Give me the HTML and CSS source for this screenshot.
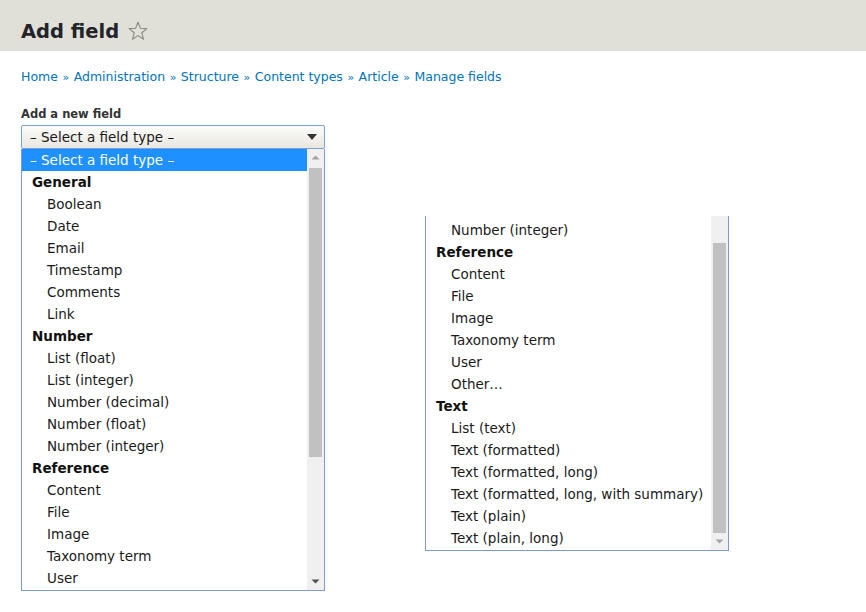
FILE: index.html
```html
<!DOCTYPE html>
<html>
<head>
<meta charset="utf-8">
<link rel="stylesheet" href="styles.css">
</head>
<body>
<header class="page-head">
  <h1 class="title">Add field</h1>
  <svg class="star" width="20" height="20" viewBox="0 0 20 20"><path d="M10 1.2 L12.4 7.3 L18.8 7.6 L13.8 11.7 L15.5 18.2 L10 14.6 L4.5 18.2 L6.2 11.7 L1.2 7.6 L7.6 7.3 Z" fill="none" stroke="#8a8a80" stroke-width="1.1" stroke-linejoin="round"/></svg>
</header>
<main class="content">
  <nav class="crumbs">
    <a href="#">Home</a><span class="sep">»</span><a href="#">Administration</a><span class="sep">»</span><a href="#">Structure</a><span class="sep">»</span><a href="#">Content types</a><span class="sep">»</span><a href="#">Article</a><span class="sep">»</span><a href="#">Manage fields</a>
  </nav>
  <div class="row">
    <div class="field">
      <div class="label">Add a new field</div>
      <div class="select">
        <span>– Select a field type –</span>
        <svg class="caret" width="10" height="7" viewBox="0 0 10 7"><path d="M0 0 H10 L5 6 Z" fill="#333"/></svg>
      </div>
      <div class="list list-open">
        <div class="items">
          <div class="opt sel">– Select a field type –</div>
          <div class="grp">General</div>
          <div class="opt">Boolean</div>
          <div class="opt">Date</div>
          <div class="opt">Email</div>
          <div class="opt">Timestamp</div>
          <div class="opt">Comments</div>
          <div class="opt">Link</div>
          <div class="grp">Number</div>
          <div class="opt">List (float)</div>
          <div class="opt">List (integer)</div>
          <div class="opt">Number (decimal)</div>
          <div class="opt">Number (float)</div>
          <div class="opt">Number (integer)</div>
          <div class="grp">Reference</div>
          <div class="opt">Content</div>
          <div class="opt">File</div>
          <div class="opt">Image</div>
          <div class="opt">Taxonomy term</div>
          <div class="opt">User</div>
        </div>
        <div class="sbar">
          <svg class="arr" width="17" height="17" viewBox="0 0 17 17"><path d="M4.5 10.5 H12.5 L8.5 6.5 Z" fill="#a3a3a3"/></svg>
          <div class="track"><div class="thumb thumb-left"></div></div>
          <svg class="arr" width="17" height="17" viewBox="0 0 17 17"><path d="M4.5 6.5 H12.5 L8.5 10.5 Z" fill="#505050"/></svg>
        </div>
      </div>
    </div>
    <div class="list list-tail">
      <div class="items items-tail">
        <div class="opt">Number (integer)</div>
        <div class="grp">Reference</div>
        <div class="opt">Content</div>
        <div class="opt">File</div>
        <div class="opt">Image</div>
        <div class="opt">Taxonomy term</div>
        <div class="opt">User</div>
        <div class="opt">Other…</div>
        <div class="grp">Text</div>
        <div class="opt">List (text)</div>
        <div class="opt">Text (formatted)</div>
        <div class="opt">Text (formatted, long)</div>
        <div class="opt">Text (formatted, long, with summary)</div>
        <div class="opt">Text (plain)</div>
        <div class="opt">Text (plain, long)</div>
      </div>
      <div class="sbar sbar-tail">
        <div class="track"><div class="thumb thumb-right"></div></div>
        <svg class="arr" width="17" height="17" viewBox="0 0 17 17"><path d="M4.5 6.5 H12.5 L8.5 10.5 Z" fill="#a3a3a3"/></svg>
      </div>
    </div>
  </div>
</main>
</body>
</html>
```

FILE: styles.css
```css
* { box-sizing: border-box; }
html, body { margin: 0; padding: 0; background: #fff; }
body { font-family: "DejaVu Sans", "Liberation Sans", sans-serif; color: #222330; font-size: 13px; }

.page-head {
  background: #e0e0d8;
  height: 51px;
  padding: 11px 21px 0;
  display: flex;
  align-items: center;
  gap: 9px;
}
.title {
  margin: 0;
  font-size: 19.5px;
  font-weight: bold;
  color: #232429;
}
.star { display: block; margin-top: -1px; }

.content { padding: 0 21px; }

.crumbs {
  margin-top: 17px;
  height: 17px;
  line-height: 17px;
  font-size: 12.5px;
}
.crumbs a { color: #0074bd; text-decoration: none; }
.crumbs .sep { color: #0074bd; margin: 0 4.5px; font-size: 11px; }

.row { display: flex; gap: 100px; margin-top: 22px; }

.field { width: 304px; }
.label {
  font-weight: bold;
  font-size: 11.5px;
  line-height: 14px;
  color: #333;
  margin-bottom: 4px;
}
.select {
  height: 24px;
  border: 1px solid #7a9fd9;
  border-radius: 2px;
  background: linear-gradient(#fcfcfa, #e8e7e0);
  display: flex;
  align-items: center;
  justify-content: space-between;
  padding: 0 7px 0 8px;
  font-size: 13.5px;
  color: #1a1a1a;
}
.caret { display: block; }

.list {
  border: 1px solid #7a9cd3;
  display: flex;
  background: #fff;
  overflow: hidden;
  font-size: 13.5px;
}
.list-open { height: 442px; border-top: none; }
.items { flex: 1; min-width: 0; }
.opt, .grp { height: 22px; line-height: 22px; white-space: nowrap; color: #1a1a1a; }
.opt { padding-left: 25px; }
.grp { padding-left: 10px; font-weight: bold; color: #111; }
.opt.sel { background: #1e90ff; color: #fff; padding-left: 8px; }

.sbar {
  width: 17px;
  background: #f0f0f0;
  display: flex;
  flex-direction: column;
  flex: none;
}
.arr { display: block; flex: none; }
.track { flex: 1; position: relative; }
.thumb { position: absolute; left: 2px; right: 2px; background: #c1c1c1; }
.thumb-left { top: 2px; height: 289px; }

.list-tail {
  width: 304px;
  height: 335px;
  margin-top: 109px;
  border-top: none;
}
.items-tail { padding-top: 3px; }
.thumb-right { top: 27px; height: 290px; }
```
